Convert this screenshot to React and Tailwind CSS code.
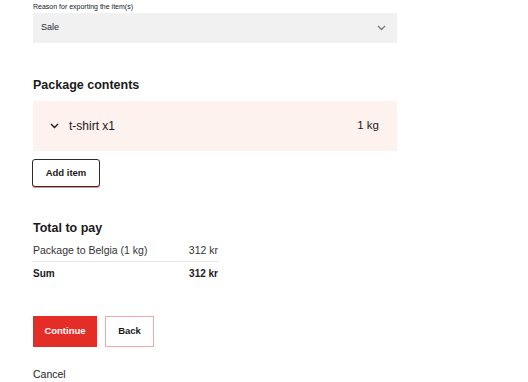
export default function App() {
	return (
		<div className="min-h-screen bg-white w-full" style={{ fontFamily: '"Liberation Sans", Arial, sans-serif' }}>
			<div className="pl-[33px] w-[397px]">
				{/* Reason select */}
				<p className="text-[7px] leading-[8px] pt-[3px] text-gray-900">Reason for exporting the item(s)</p>
				<div className="mt-[2px] h-[30px] w-[364px] bg-[#f1f1f1] flex items-center justify-between pl-[8px] pr-[11px]">
					<span className="text-[9px] text-gray-800">Sale</span>
					<svg width="9" height="6" viewBox="0 0 9 6" fill="none">
						<path d="M1 1l3.5 3.5L8 1" stroke="#7a7a7a" strokeWidth="1.3" />
					</svg>
				</div>

				{/* Package contents */}
				<h2 className="mt-[34px] text-[12.5px] leading-[16px] font-bold text-[#1a1a1a]">Package contents</h2>
				<div className="mt-[8px] h-[50px] w-[364px] bg-[#fdf2ee] flex items-center justify-between pl-[17px] pr-[18px]">
					<div className="flex items-center gap-[10px]">
						<svg width="9" height="6" viewBox="0 0 9 6" fill="none">
							<path d="M1 1l3.5 3.5L8 1" stroke="#1a1a1a" strokeWidth="1.4" />
						</svg>
						<span className="text-[12px] text-[#1a1a1a]">t-shirt x1</span>
					</div>
					<span className="text-[11.5px] text-[#1a1a1a]">1 kg</span>
				</div>
				<button className="mt-[8px] h-[28px] w-[68px] -ml-[1px] rounded-[3px] border border-[#2b2b2b] shadow-[0_1px_0_#f28b82] bg-white text-[9.5px] font-bold text-[#1a1a1a]">
					Add item
				</button>

				{/* Total to pay */}
				<h2 className="mt-[33px] text-[12.5px] leading-[16px] font-bold text-[#1a1a1a]">Total to pay</h2>
				<div className="mt-[4px] w-[185px]">
					<div className="flex justify-between h-[22px] items-center border-b border-[#e6e6e6] text-[10.5px] text-[#333]">
						<span>Package to Belgia (1 kg)</span>
						<span>312 kr</span>
					</div>
					<div className="flex justify-between h-[22px] items-center text-[10px] font-bold text-[#1a1a1a]">
						<span>Sum</span>
						<span>312 kr</span>
					</div>
				</div>

				{/* Actions */}
				<div className="mt-[32px] flex gap-[8px]">
					<button className="h-[31px] w-[64px] bg-[#e32d26] text-white text-[9.5px] font-bold">Continue</button>
					<button className="h-[31px] w-[49px] bg-white border border-[#f4a7a3] text-[9.5px] font-bold text-[#1a1a1a]">Back</button>
				</div>
				<p className="mt-[20px] text-[10.5px] leading-[14px] text-[#222]">Cancel</p>
			</div>
		</div>
	)
}
